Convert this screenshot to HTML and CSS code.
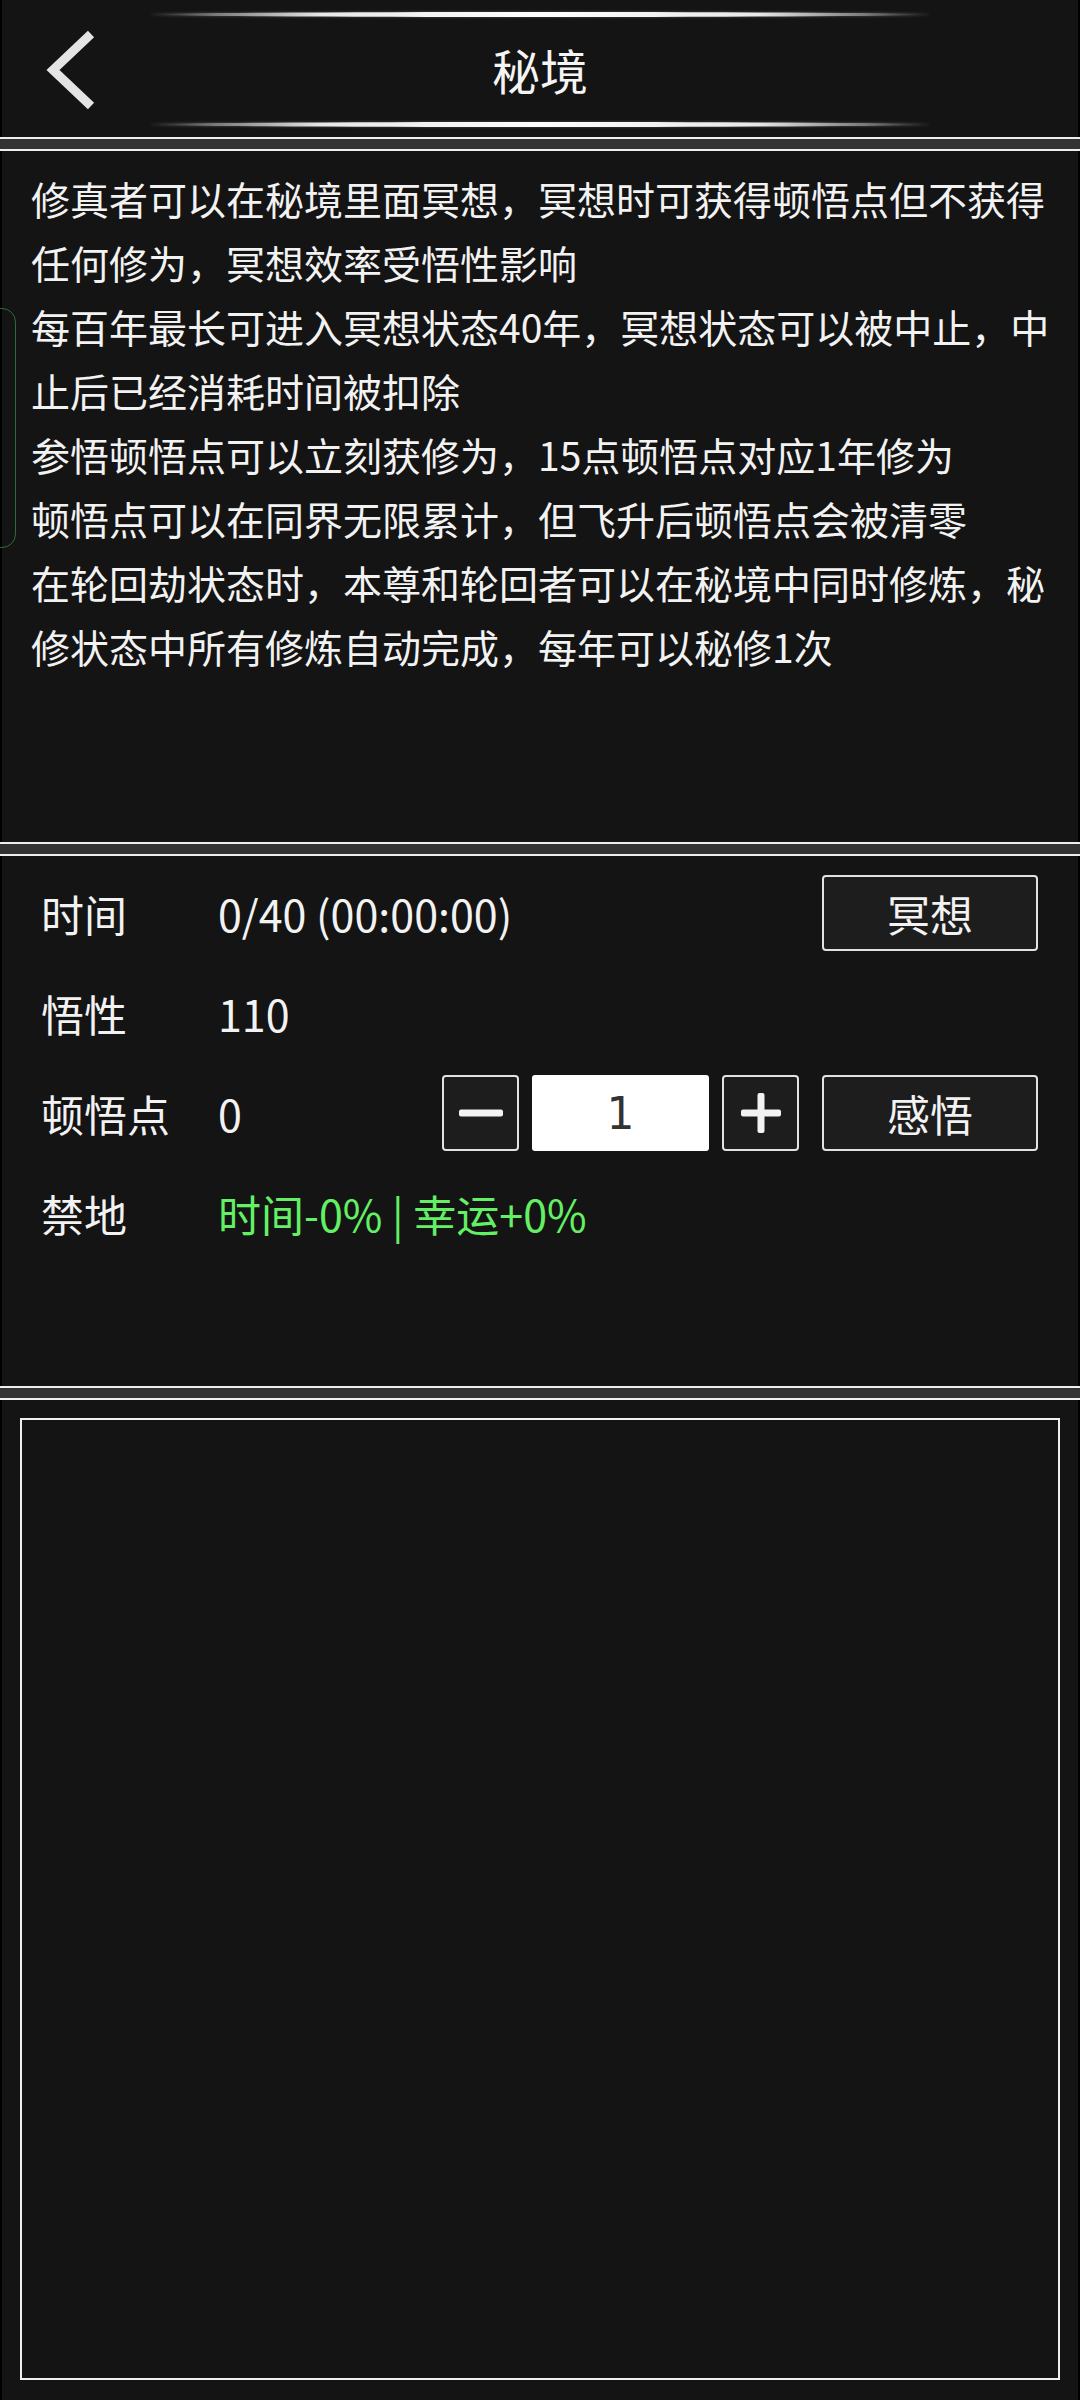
FILE: index.html
```html
<!DOCTYPE html>
<html lang="zh-CN">
<head>
    <meta charset="UTF-8">
    <meta name="viewport" content="width=device-width, initial-scale=1.0">
    <title>秘境</title>
    <link rel="stylesheet" href="styles.css">
</head>
<body>
    <div class="screen">
        <header class="top-bar">
            <div class="deco-line"></div>
            <div class="title-row">
                <div class="back">
                    <svg width="56" height="80" viewBox="0 0 56 80">
                        <polyline points="48,4 10,40 48,76" fill="none" stroke="#e4e4e4" stroke-width="9" stroke-linejoin="miter"/>
                    </svg>
                </div>
                <h1>秘境</h1>
                <div></div>
            </div>
            <div class="deco-line"></div>
        </header>

        <div class="divider"></div>

        <section class="panel intro">
            <p>修真者可以在秘境里面冥想，冥想时可获得顿悟点但不获得任何修为，冥想效率受悟性影响</p>
            <p>每百年最长可进入冥想状态40年，冥想状态可以被中止，中止后已经消耗时间被扣除</p>
            <p>参悟顿悟点可以立刻获修为，15点顿悟点对应1年修为</p>
            <p>顿悟点可以在同界无限累计，但飞升后顿悟点会被清零</p>
            <p>在轮回劫状态时，本尊和轮回者可以在秘境中同时修炼，秘修状态中所有修炼自动完成，每年可以秘修1次</p>
        </section>

        <div class="divider"></div>

        <section class="panel stats">
            <div class="stat-row">
                <span class="label">时间</span>
                <span class="value">0/40 (00:00:00)</span>
                <button class="btn">冥想</button>
            </div>
            <div class="stat-row">
                <span class="label">悟性</span>
                <span class="value">110</span>
            </div>
            <div class="stat-row">
                <span class="label">顿悟点</span>
                <span class="value">0</span>
                <div class="stepper">
                    <button class="step-btn">
                        <svg width="48" height="48" viewBox="0 0 48 48"><rect x="2" y="20.5" width="44" height="7" rx="2" fill="#f2f2f2"/></svg>
                    </button>
                    <div class="count">1</div>
                    <button class="step-btn">
                        <svg width="48" height="48" viewBox="0 0 48 48"><rect x="4" y="20.5" width="40" height="7" rx="2" fill="#f2f2f2"/><rect x="20.5" y="4" width="7" height="40" rx="2" fill="#f2f2f2"/></svg>
                    </button>
                </div>
                <button class="btn">感悟</button>
            </div>
            <div class="stat-row">
                <span class="label">禁地</span>
                <span class="value green">时间-0% | 幸运+0%</span>
            </div>
        </section>

        <div class="divider"></div>

        <section class="panel log">
            <div class="log-box"></div>
        </section>

        <div class="side-tab"></div>
    </div>
</body>
</html>
```

FILE: styles.css
```css
body {
    margin: 0;
    background: #000;
    font-family: "Noto Sans CJK SC", "Noto Sans", sans-serif;
    color: #f2f2f2;
}

.screen {
    width: 1080px;
    height: 2400px;
    display: flex;
    flex-direction: column;
    position: relative;
    overflow: hidden;
}

.panel,
.top-bar {
    background: #141414;
    margin: 0 2px;
}

/* header */
.top-bar {
    height: 137px;
    display: flex;
    flex-direction: column;
    align-items: center;
}

.deco-line {
    width: 780px;
    height: 5px;
    margin-top: 12px;
    border-radius: 50%;
    background: linear-gradient(90deg, rgba(255,255,255,0) 0%, #666 6%, #e8e8e8 22%, #fff 50%, #e8e8e8 78%, #666 94%, rgba(255,255,255,0) 100%);
    box-shadow: 0 0 3px rgba(255,255,255,0.25);
}

.deco-line:last-child {
    margin-top: 0;
    margin-bottom: 10px;
}

.title-row {
    flex: 1;
    width: 100%;
    display: grid;
    grid-template-columns: 1fr auto 1fr;
    align-items: center;
}

.back {
    padding-left: 41px;
    display: flex;
    align-items: center;
}

.back svg {
    display: block;
}

h1 {
    margin: 0;
    font-size: 48px;
    font-weight: 400;
    line-height: 1;
    color: #f4f4f4;
    position: relative;
    top: -1px;
}

.divider {
    height: 10px;
    background: #333;
    border-top: 2px solid #eee;
    border-bottom: 2px solid #eee;
}

/* intro text */
.intro {
    height: 691px;
    box-sizing: border-box;
    padding: 15px 17px 0 29px;
}

.intro p {
    margin: 0;
    font-size: 39px;
    line-height: 64px;
}

/* stats */
.stats {
    height: 530px;
    box-sizing: border-box;
    padding: 19px 40px 0 39px;
    display: flex;
    flex-direction: column;
    gap: 24px;
}

.stat-row {
    height: 76px;
    display: flex;
    align-items: center;
    font-size: 43px;
}

.label {
    width: 177px;
    flex-shrink: 0;
}

.value {
    flex: 1;
}

.green {
    color: #64f064;
}

.btn {
    width: 216px;
    height: 76px;
    box-sizing: border-box;
    background: #1d1d1d;
    border: 2px solid #e2e2e2;
    border-radius: 4px;
    color: #f2f2f2;
    font-family: inherit;
    font-size: 43px;
    padding: 0;
}

.stepper {
    display: flex;
    align-items: center;
    gap: 13px;
    margin-right: 23px;
}

.step-btn {
    width: 77px;
    height: 76px;
    box-sizing: border-box;
    background: #1d1d1d;
    border: 2px solid #e2e2e2;
    border-radius: 4px;
    padding: 0;
    display: flex;
    align-items: center;
    justify-content: center;
}

.step-btn svg {
    display: block;
}

.count {
    width: 177px;
    height: 76px;
    background: #fff;
    border-radius: 3px;
    color: #333;
    font-family: "DejaVu Sans", sans-serif;
    font-size: 44px;
    display: flex;
    align-items: center;
    justify-content: center;
}

/* log */
.log {
    flex: 1;
    display: flex;
    padding: 18px 18px 20px 18px;
}

.log-box {
    flex: 1;
    border: 2px solid #f0f0f0;
}

/* floating tab at left edge */
.side-tab {
    position: absolute;
    left: -26px;
    top: 308px;
    width: 40px;
    height: 238px;
    border: 1.5px solid #2f6b38;
    border-radius: 14px;
}
```
